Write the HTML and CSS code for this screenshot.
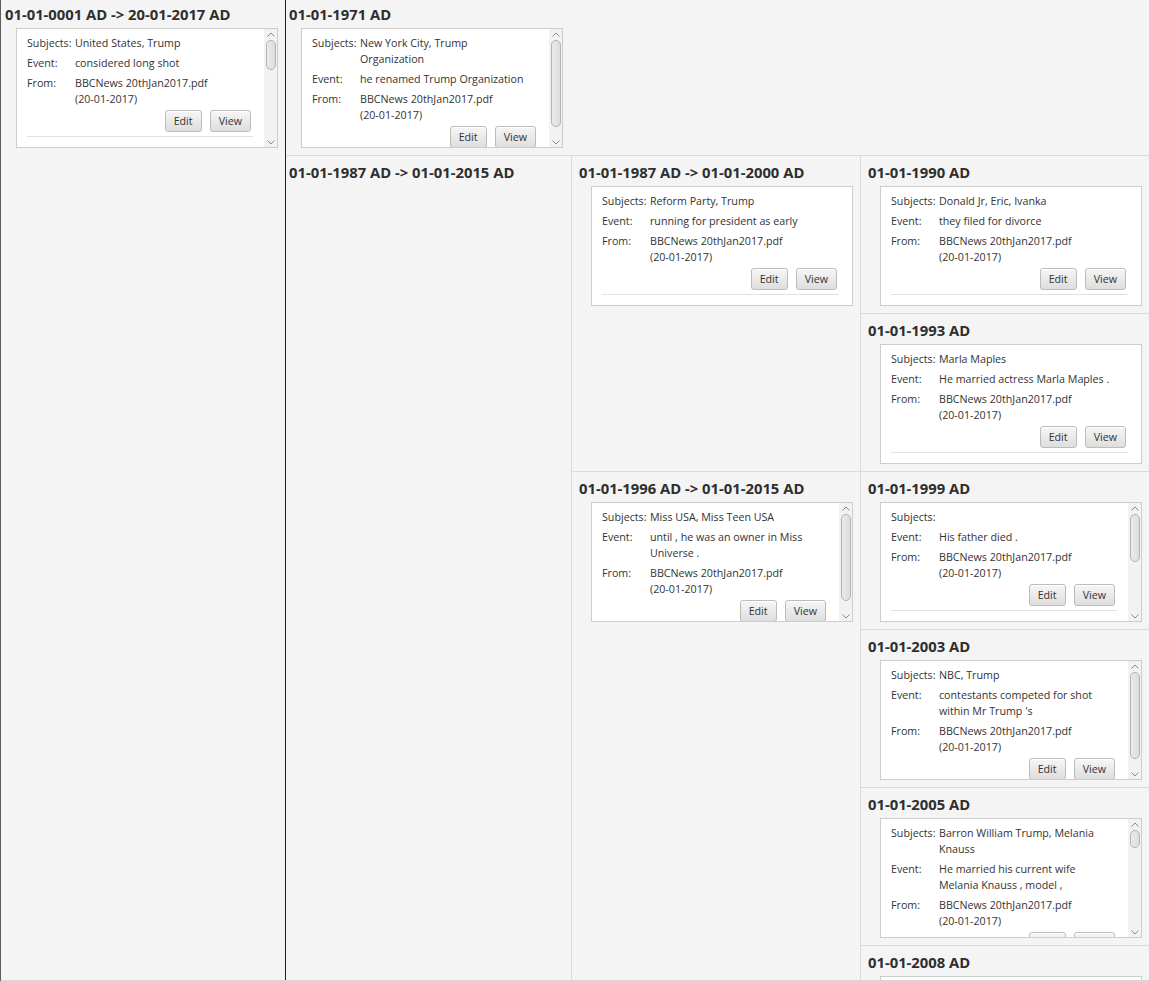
FILE: index.html
```html
<!DOCTYPE html>
<html>
<head>
<meta charset="utf-8">
<title>Timeline</title>
<link rel="stylesheet" href="styles.css">
</head>
<body>
<div class="viewport">
  <div class="node">
    <div class="cell root flush">
      <div class="title">01-01-0001 AD -&gt; 20-01-2017 AD</div>
      <div class="card">
        <div class="card-body">
          <div class="fields">
            <span class="lbl">Subjects:</span><span class="val">United States, Trump</span>
            <span class="lbl">Event:</span><span class="val">considered long shot</span>
            <span class="lbl">From:</span><span class="val">BBCNews 20thJan2017.pdf<br>(20-01-2017)</span>
          </div>
          <div class="actions"><button class="btn">Edit</button><button class="btn">View</button></div>
        </div>
        <div class="sbar"><div class="arrow up"><svg width="8" height="5" viewBox="0 0 8 5"><path d="M0.5 4.5 L4 1 L7.5 4.5" fill="none" stroke="#8a8a8a" stroke-width="1"/></svg></div><div class="thumb thumb-m"></div><div class="arrow down"><svg width="8" height="5" viewBox="0 0 8 5"><path d="M0.5 0.5 L4 4 L7.5 0.5" fill="none" stroke="#8a8a8a" stroke-width="1"/></svg></div></div>
      </div>
    </div>
    <div class="children">
      <div class="node">
        <div class="cell lvl1 leaf flush">
          <div class="title">01-01-1971 AD</div>
          <div class="card">
            <div class="card-body">
              <div class="fields">
                <span class="lbl">Subjects:</span><span class="val">New York City, Trump<br>Organization</span>
                <span class="lbl">Event:</span><span class="val">he renamed Trump Organization</span>
                <span class="lbl">From:</span><span class="val">BBCNews 20thJan2017.pdf<br>(20-01-2017)</span>
              </div>
              <div class="actions"><button class="btn">Edit</button><button class="btn">View</button></div>
            </div>
            <div class="sbar"><div class="arrow up"><svg width="8" height="5" viewBox="0 0 8 5"><path d="M0.5 4.5 L4 1 L7.5 4.5" fill="none" stroke="#8a8a8a" stroke-width="1"/></svg></div><div class="thumb thumb-l"></div><div class="arrow down"><svg width="8" height="5" viewBox="0 0 8 5"><path d="M0.5 0.5 L4 4 L7.5 0.5" fill="none" stroke="#8a8a8a" stroke-width="1"/></svg></div></div>
          </div>
        </div>
      </div>
      <div class="node">
        <div class="cell lvl1">
          <div class="title">01-01-1987 AD -&gt; 01-01-2015 AD</div>
        </div>
        <div class="children">
          <div class="node">
            <div class="cell">
              <div class="title">01-01-1987 AD -&gt; 01-01-2000 AD</div>
              <div class="card">
                <div class="card-body wide">
                  <div class="fields">
                    <span class="lbl">Subjects:</span><span class="val">Reform Party, Trump</span>
                    <span class="lbl">Event:</span><span class="val">running for president as early</span>
                    <span class="lbl">From:</span><span class="val">BBCNews 20thJan2017.pdf<br>(20-01-2017)</span>
                  </div>
                  <div class="actions"><button class="btn">Edit</button><button class="btn">View</button></div>
                </div>
              </div>
            </div>
            <div class="children">
              <div class="node">
                <div class="cell leaf">
                  <div class="title">01-01-1990 AD</div>
                  <div class="card">
                    <div class="card-body wide">
                      <div class="fields">
                        <span class="lbl">Subjects:</span><span class="val">Donald Jr, Eric, Ivanka</span>
                        <span class="lbl">Event:</span><span class="val">they filed for divorce</span>
                        <span class="lbl">From:</span><span class="val">BBCNews 20thJan2017.pdf<br>(20-01-2017)</span>
                      </div>
                      <div class="actions"><button class="btn">Edit</button><button class="btn">View</button></div>
                    </div>
                  </div>
                </div>
              </div>
              <div class="node">
                <div class="cell leaf">
                  <div class="title">01-01-1993 AD</div>
                  <div class="card">
                    <div class="card-body wide">
                      <div class="fields">
                        <span class="lbl">Subjects:</span><span class="val">Marla Maples</span>
                        <span class="lbl">Event:</span><span class="val">He married actress Marla Maples .</span>
                        <span class="lbl">From:</span><span class="val">BBCNews 20thJan2017.pdf<br>(20-01-2017)</span>
                      </div>
                      <div class="actions"><button class="btn">Edit</button><button class="btn">View</button></div>
                    </div>
                  </div>
                </div>
              </div>
            </div>
          </div>
          <div class="node">
            <div class="cell">
              <div class="title">01-01-1996 AD -&gt; 01-01-2015 AD</div>
              <div class="card">
                <div class="card-body">
                  <div class="fields">
                    <span class="lbl">Subjects:</span><span class="val">Miss USA, Miss Teen USA</span>
                    <span class="lbl">Event:</span><span class="val">until , he was an owner in Miss<br>Universe .</span>
                    <span class="lbl">From:</span><span class="val">BBCNews 20thJan2017.pdf<br>(20-01-2017)</span>
                  </div>
                  <div class="actions"><button class="btn">Edit</button><button class="btn">View</button></div>
                </div>
                <div class="sbar"><div class="arrow up"><svg width="8" height="5" viewBox="0 0 8 5"><path d="M0.5 4.5 L4 1 L7.5 4.5" fill="none" stroke="#8a8a8a" stroke-width="1"/></svg></div><div class="thumb thumb-l"></div><div class="arrow down"><svg width="8" height="5" viewBox="0 0 8 5"><path d="M0.5 0.5 L4 4 L7.5 0.5" fill="none" stroke="#8a8a8a" stroke-width="1"/></svg></div></div>
              </div>
            </div>
            <div class="children">
              <div class="node">
                <div class="cell leaf">
                  <div class="title">01-01-1999 AD</div>
                  <div class="card">
                    <div class="card-body">
                      <div class="fields">
                        <span class="lbl">Subjects:</span><span class="val"></span>
                        <span class="lbl">Event:</span><span class="val">His father died .</span>
                        <span class="lbl">From:</span><span class="val">BBCNews 20thJan2017.pdf<br>(20-01-2017)</span>
                      </div>
                      <div class="actions"><button class="btn">Edit</button><button class="btn">View</button></div>
                    </div>
                    <div class="sbar"><div class="arrow up"><svg width="8" height="5" viewBox="0 0 8 5"><path d="M0.5 4.5 L4 1 L7.5 4.5" fill="none" stroke="#8a8a8a" stroke-width="1"/></svg></div><div class="thumb thumb-h"></div><div class="arrow down"><svg width="8" height="5" viewBox="0 0 8 5"><path d="M0.5 0.5 L4 4 L7.5 0.5" fill="none" stroke="#8a8a8a" stroke-width="1"/></svg></div></div>
                  </div>
                </div>
              </div>
              <div class="node">
                <div class="cell leaf">
                  <div class="title">01-01-2003 AD</div>
                  <div class="card">
                    <div class="card-body">
                      <div class="fields">
                        <span class="lbl">Subjects:</span><span class="val">NBC, Trump</span>
                        <span class="lbl">Event:</span><span class="val">contestants competed for shot<br>within Mr Trump 's</span>
                        <span class="lbl">From:</span><span class="val">BBCNews 20thJan2017.pdf<br>(20-01-2017)</span>
                      </div>
                      <div class="actions"><button class="btn">Edit</button><button class="btn">View</button></div>
                    </div>
                    <div class="sbar"><div class="arrow up"><svg width="8" height="5" viewBox="0 0 8 5"><path d="M0.5 4.5 L4 1 L7.5 4.5" fill="none" stroke="#8a8a8a" stroke-width="1"/></svg></div><div class="thumb thumb-l"></div><div class="arrow down"><svg width="8" height="5" viewBox="0 0 8 5"><path d="M0.5 0.5 L4 4 L7.5 0.5" fill="none" stroke="#8a8a8a" stroke-width="1"/></svg></div></div>
                  </div>
                </div>
              </div>
              <div class="node">
                <div class="cell leaf">
                  <div class="title">01-01-2005 AD</div>
                  <div class="card">
                    <div class="card-body">
                      <div class="fields">
                        <span class="lbl">Subjects:</span><span class="val">Barron William Trump, Melania<br>Knauss</span>
                        <span class="lbl">Event:</span><span class="val">He married his current wife<br>Melania Knauss , model ,</span>
                        <span class="lbl">From:</span><span class="val">BBCNews 20thJan2017.pdf<br>(20-01-2017)</span>
                      </div>
                      <div class="actions"><button class="btn">Edit</button><button class="btn">View</button></div>
                    </div>
                    <div class="sbar"><div class="arrow up"><svg width="8" height="5" viewBox="0 0 8 5"><path d="M0.5 4.5 L4 1 L7.5 4.5" fill="none" stroke="#8a8a8a" stroke-width="1"/></svg></div><div class="thumb thumb-s"></div><div class="arrow down"><svg width="8" height="5" viewBox="0 0 8 5"><path d="M0.5 0.5 L4 4 L7.5 0.5" fill="none" stroke="#8a8a8a" stroke-width="1"/></svg></div></div>
                  </div>
                </div>
              </div>
              <div class="node">
                <div class="cell leaf">
                  <div class="title">01-01-2008 AD</div>
                  <div class="card">
                    <div class="card-body wide">
                      <div class="fields">
                        <span class="lbl">Subjects:</span><span class="val">Trump</span>
                      </div>
                    </div>
                  </div>
                </div>
              </div>
            </div>
          </div>
        </div>
      </div>
    </div>
  </div>
</div>
</body>
</html>
```
FILE: styles.css
```css
html, body {
  margin: 0;
  padding: 0;
}

body {
  background: #f4f4f4;
  color: #333333;
  font-family: "Open Sans", "Noto Sans", sans-serif;
  overflow: hidden;
}

.viewport {
  height: 980px;
  overflow: hidden;
  border-left: 1px solid #5e5e5e;
  border-bottom: 2px solid #d6d6d6;
}

.node {
  display: flex;
}

.children {
  flex: 1;
  min-width: 0;
  display: flex;
  flex-direction: column;
}

.children > .node + .node {
  border-top: 1px solid #dadada;
}

.cell {
  box-sizing: border-box;
  flex: none;
  width: 289px;
  padding: 2px 0 7px 7px;
  border-right: 1px solid #dadada;
}

.cell.root {
  width: 285px;
  padding-left: 4px;
  border-right: 1px solid #1e1e1e;
}

.cell.lvl1 {
  width: 286px;
  padding-left: 3px;
}

.cell.leaf {
  flex: 1;
  width: auto;
  border-right: none;
}

.cell.flush {
  padding-top: 0;
}

.title {
  font-size: 14.8px;
  font-weight: 700;
  line-height: 28px;
  white-space: nowrap;
  color: #2e2e2e;
}

.card {
  box-sizing: border-box;
  display: flex;
  width: 262px;
  height: 120px;
  margin-left: 12px;
  background: #ffffff;
  border: 1px solid #cdcdcd;
}

.root .card {
  margin-left: 11px;
}

.card-body {
  flex: 1;
  min-width: 0;
  overflow: hidden;
  padding: 6px 11px 0 10px;
}

.card-body.wide {
  padding-right: 13px;
}

.fields {
  display: grid;
  grid-template-columns: 48px 1fr;
  row-gap: 4px;
  font-size: 10.7px;
  line-height: 16px;
  white-space: nowrap;
}

.actions {
  display: flex;
  justify-content: flex-end;
  gap: 8px;
  margin-top: 3px;
  padding: 0 2px 4px 0;
  border-bottom: 1px solid #e2e2e2;
}

.btn {
  box-sizing: border-box;
  height: 22px;
  padding: 0 8px;
  font-family: inherit;
  font-size: 10.7px;
  color: #333333;
  border: 1px solid #bcbcbc;
  border-radius: 3px;
  background: linear-gradient(#f6f6f6, #dedede);
  box-shadow: inset 0 1px 0 #ffffff;
}

.sbar {
  flex: none;
  width: 13px;
  display: flex;
  flex-direction: column;
  align-items: center;
  background: #f2f2f2;
}

.arrow {
  height: 10px;
  width: 100%;
  display: flex;
  align-items: center;
  justify-content: center;
}

.arrow.down {
  margin-top: auto;
}

.thumb {
  box-sizing: border-box;
  width: 10px;
  margin-top: 1px;
  border: 1px solid #b3b3b3;
  border-radius: 5px;
  background: linear-gradient(to right, #ebebeb, #dddddd);
}

.thumb-s { height: 18px; }
.thumb-m { height: 30px; }
.thumb-h { height: 48px; }
.thumb-l { height: 87px; }
```
